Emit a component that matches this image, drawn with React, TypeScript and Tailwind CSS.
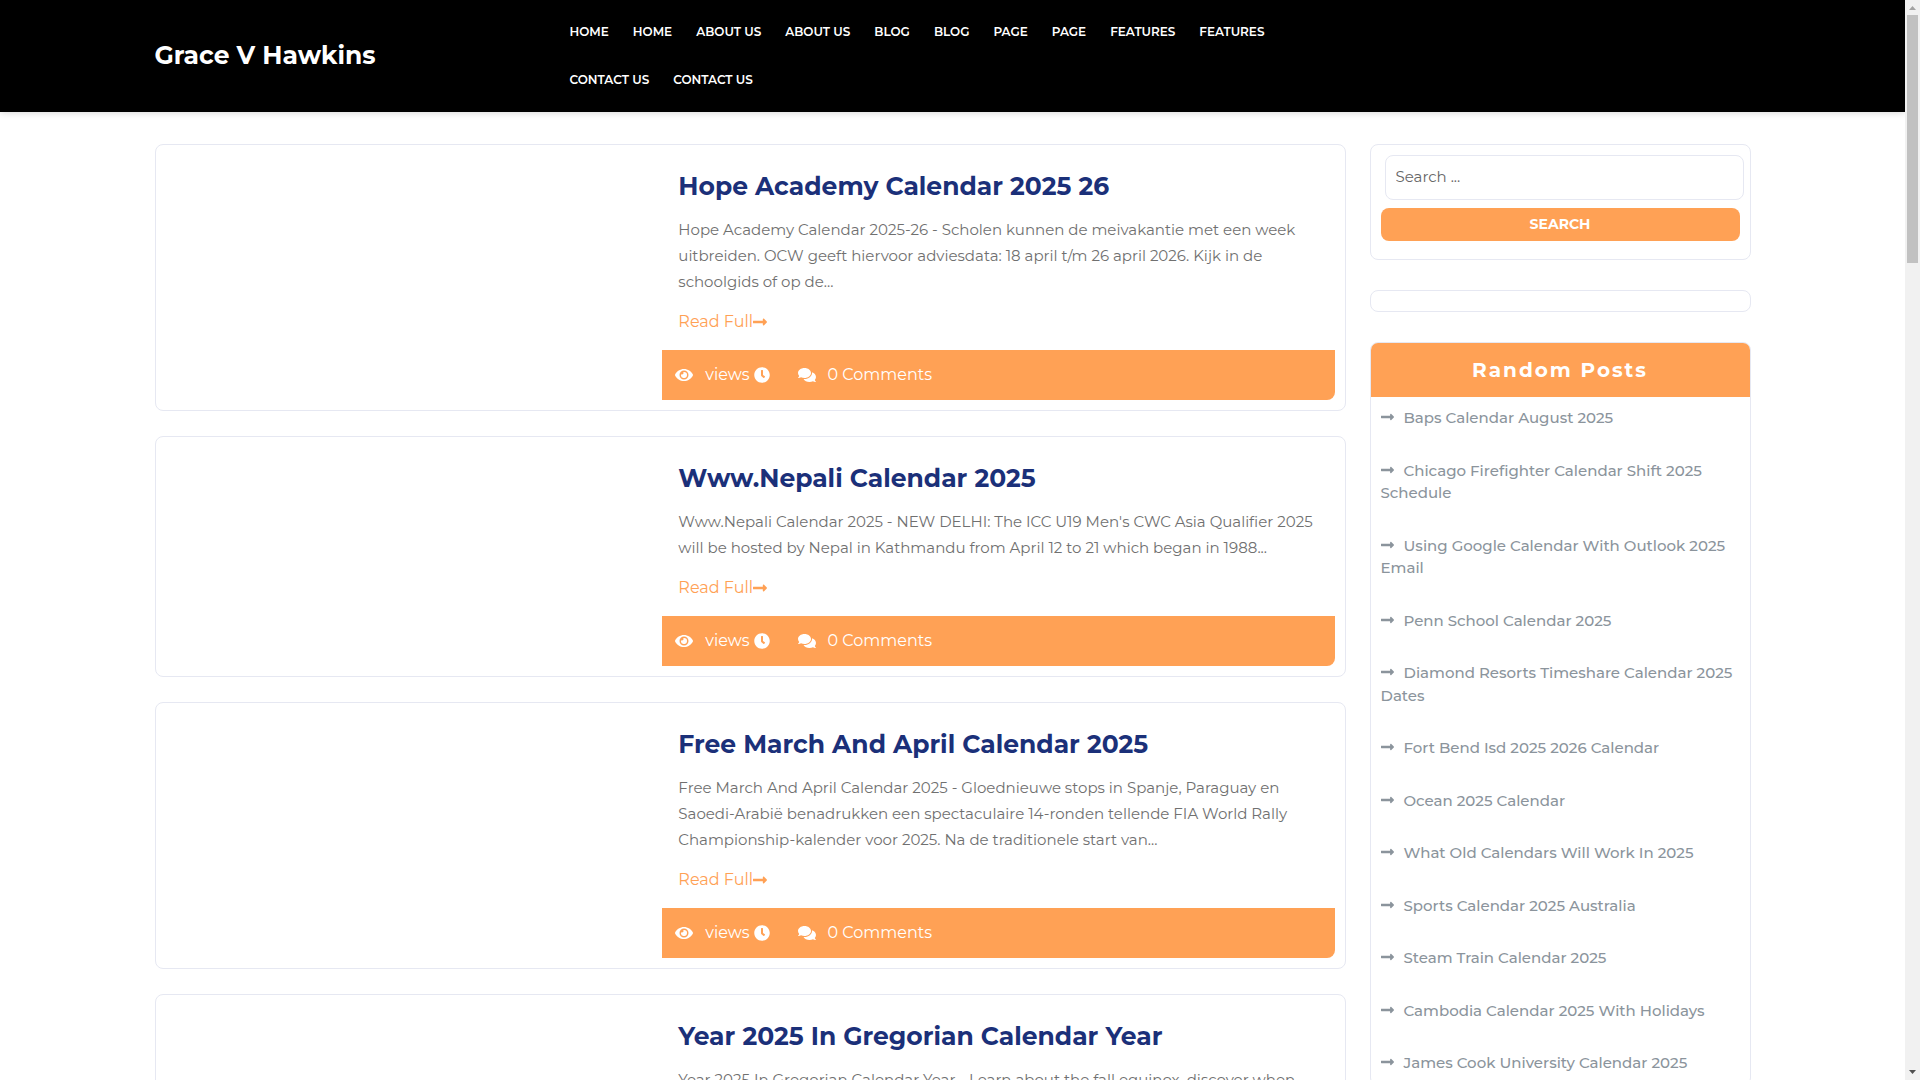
import { FaClock, FaComments, FaEye, FaLongArrowAltRight } from "react-icons/fa";

const navLinks = [
  "Home",
  "Home",
  "About Us",
  "About Us",
  "Blog",
  "Blog",
  "Page",
  "Page",
  "Features",
  "Features",
  "Contact Us",
  "Contact Us",
];

const posts = [
  {
    title: "Hope Academy Calendar 2025 26",
    excerpt:
      "Hope Academy Calendar 2025-26 - Scholen kunnen de meivakantie met een week uitbreiden. OCW geeft hiervoor adviesdata: 18 april t/m 26 april 2026. Kijk in de schoolgids of op de...",
  },
  {
    title: "Www.Nepali Calendar 2025",
    excerpt:
      "Www.Nepali Calendar 2025 - NEW DELHI: The ICC U19 Men's CWC Asia Qualifier 2025 will be hosted by Nepal in Kathmandu from April 12 to 21 which began in 1988...",
  },
  {
    title: "Free March And April Calendar 2025",
    excerpt:
      "Free March And April Calendar 2025 - Gloednieuwe stops in Spanje, Paraguay en Saoedi-Arabië benadrukken een spectaculaire 14-ronden tellende FIA World Rally Championship-kalender voor 2025. Na de traditionele start van...",
  },
  {
    title: "Year 2025 In Gregorian Calendar Year",
    excerpt: "Year 2025 In Gregorian Calendar Year - Learn about the fall equinox, discover when",
  },
];

const randomPosts = [
  "Baps Calendar August 2025",
  "Chicago Firefighter Calendar Shift 2025 Schedule",
  "Using Google Calendar With Outlook 2025 Email",
  "Penn School Calendar 2025",
  "Diamond Resorts Timeshare Calendar 2025 Dates",
  "Fort Bend Isd 2025 2026 Calendar",
  "Ocean 2025 Calendar",
  "What Old Calendars Will Work In 2025",
  "Sports Calendar 2025 Australia",
  "Steam Train Calendar 2025",
  "Cambodia Calendar 2025 With Holidays",
  "James Cook University Calendar 2025",
];

function Header() {
  return (
    <header className="bg-black py-2 shadow-[0_0_8px_rgba(0,0,0,0.2)]">
      <div className="mx-auto flex max-w-[1620px] items-center">
        <div className="w-1/4 px-3 pb-[2px]">
          <a href="#" className="text-[25px] leading-8 font-bold text-white">
            Grace V Hawkins
          </a>
        </div>
        <nav className="w-1/2 px-3">
          <ul className="flex flex-wrap gap-x-1">
            {navLinks.map((link, i) => (
              <li key={i}>
                <a href="#" className="block px-[10px] text-xs leading-[48px] font-semibold text-white uppercase">
                  {link}
                </a>
              </li>
            ))}
          </ul>
        </nav>
      </div>
    </header>
  );
}

function PostCard({ title, excerpt }: { title: string; excerpt: string }) {
  return (
    <article className="flex rounded-lg border border-[#e6e8f2] p-[10px]">
      <div className="w-[42.5%]" />
      <div className="flex-1">
        <div className="p-4">
          <h2 className="mb-4 text-[25px] leading-[30px] font-bold text-[#1b3079]">
            <a href="#">{title}</a>
          </h2>
          <p className="mb-[14px] text-[15px] leading-[26px] text-[#707070]">{excerpt}</p>
          <a href="#" className="flex items-center text-base leading-[25px] text-[#ffa155]">
            Read Full
            <FaLongArrowAltRight className="h-4 w-[14px]" />
          </a>
        </div>
        <div className="flex h-[50px] items-center rounded-br-lg bg-[#ffa155] px-[13px] text-base text-white">
          <FaEye className="mr-3 size-[18px]" />
          views
          <FaClock className="mr-7 ml-1 size-4" />
          <FaComments className="mr-3 size-[18px]" />
          <span>0 Comments</span>
        </div>
      </div>
    </article>
  );
}

function Sidebar() {
  return (
    <aside className="flex w-1/4 flex-col gap-[30px] px-3">
      <form className="rounded-lg border border-[#e6e8f2] px-[10px] pt-[10px] pb-[18px]" onSubmit={(e) => e.preventDefault()}>
        <div className="-mr-1 ml-1">
          <input
            type="search"
            aria-label="Search for:"
            placeholder="Search ..."
            className="block h-[45px] w-full rounded-lg border border-[#e6e8f2] px-[10px] pb-[2px] text-[15px] placeholder:text-[#666]"
          />
        </div>
        <button type="submit" className="mt-2 block h-[33px] w-full rounded-lg bg-[#ffa155] pb-[2px] text-sm font-bold text-white uppercase">
          Search
        </button>
      </form>
      <div className="h-[22px] rounded-lg border border-[#e6e8f2]" />
      <section className="overflow-hidden rounded-lg border border-[#e6e8f2]">
        <h3 className="bg-[#ffa155] text-center text-xl leading-[54px] font-bold tracking-[2px] text-white">Random Posts</h3>
        <ul className="flex flex-col gap-[30px] p-[10px]">
          {randomPosts.map((post) => (
            <li key={post} className="text-[15px] leading-normal font-medium text-[#8b949c]">
              <a href="#">
                <FaLongArrowAltRight className="mr-[10px] inline h-4 w-[13px] align-[-2px]" />
                {post}
              </a>
            </li>
          ))}
        </ul>
      </section>
    </aside>
  );
}

function Scrollbar() {
  return (
    <div className="flex w-[15px] flex-col items-center justify-between bg-[#f1f1f1]" aria-hidden>
      <div className="flex flex-col items-center">
        <svg width="15" height="15" viewBox="0 0 15 15">
          <path d="M4 10h7L7.5 6z" fill="#a3a3a3" />
        </svg>
        <div className="h-[248px] w-[11px] bg-[#c1c1c1]" />
      </div>
      <svg width="15" height="15" viewBox="0 0 15 15">
        <path d="M4 5h7L7.5 9z" fill="#505050" />
      </svg>
    </div>
  );
}

export default function App() {
  return (
    <div className="flex h-screen overflow-hidden bg-white font-[Montserrat,Inter,sans-serif]">
      <div className="flex-1 overflow-hidden">
        <Header />
        <main className="mx-auto mt-8 flex max-w-[1620px]">
          <div className="flex w-3/4 flex-col gap-[25px] px-3">
            {posts.map((post) => (
              <PostCard key={post.title} {...post} />
            ))}
          </div>
          <Sidebar />
        </main>
      </div>
      <Scrollbar />
    </div>
  );
}
